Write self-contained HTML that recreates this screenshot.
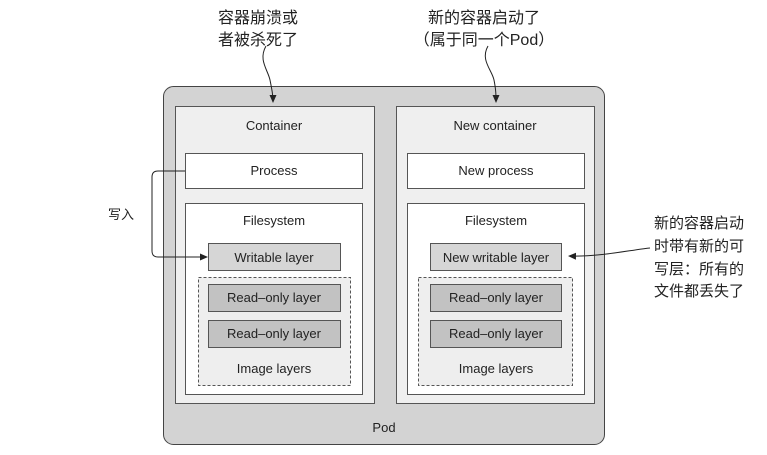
<!DOCTYPE html>
<html><head><meta charset="utf-8"><style>
html,body{margin:0;padding:0;background:#fff;width:767px;height:455px;overflow:hidden}
svg text{font-family:"Liberation Sans","Noto Sans CJK SC",sans-serif;fill:#222}
</style></head><body>
<svg width="767" height="455" viewBox="0 0 767 455" xmlns="http://www.w3.org/2000/svg">
<defs><marker id="a" markerWidth="8" markerHeight="8" refX="7" refY="4" orient="auto" markerUnits="userSpaceOnUse"><path d="M0,0.5 L8,4 L0,7.5z" fill="#222"/></marker></defs>
<rect x="163.5" y="86.5" width="441" height="358" rx="10" fill="#d3d3d3" stroke="#444"/>
<g stroke="#555" stroke-width="1">
<rect x="175.5" y="106.5" width="199" height="297" fill="#efefef"/>
<rect x="396.5" y="106.5" width="198" height="297" fill="#efefef"/>
<rect x="185.5" y="153.5" width="177" height="35" fill="#fff"/>
<rect x="407.5" y="153.5" width="177" height="35" fill="#fff"/>
<rect x="185.5" y="203.5" width="177" height="191" fill="#fff"/>
<rect x="407.5" y="203.5" width="177" height="191" fill="#fff"/>
<rect x="198.5" y="277.5" width="152" height="108" fill="#eee" stroke-dasharray="3,2"/>
<rect x="418.5" y="277.5" width="154" height="108" fill="#eee" stroke-dasharray="3,2"/>
<rect x="208.5" y="243.5" width="132" height="27" fill="#d6d6d6"/>
<rect x="430.5" y="243.5" width="131" height="27" fill="#d6d6d6"/>
<rect x="208.5" y="284.5" width="132" height="27" fill="#c2c2c2"/>
<rect x="208.5" y="320.5" width="132" height="27" fill="#c2c2c2"/>
<rect x="430.5" y="284.5" width="131" height="27" fill="#c2c2c2"/>
<rect x="430.5" y="320.5" width="131" height="27" fill="#c2c2c2"/>
</g>
<g font-size="13" text-anchor="middle">
<text x="274" y="130">Container</text><text x="495" y="130">New container</text>
<text x="274" y="175">Process</text><text x="496" y="175">New process</text>
<text x="274" y="225">Filesystem</text><text x="496" y="225">Filesystem</text>
<text x="274" y="262">Writable layer</text><text x="496" y="262">New writable layer</text>
<text x="274" y="302">Read–only layer</text><text x="496" y="302">Read–only layer</text>
<text x="274" y="338">Read–only layer</text><text x="496" y="338">Read–only layer</text>
<text x="274" y="373">Image layers</text><text x="496" y="373">Image layers</text>
<text x="384" y="432">Pod</text>
</g>
<g font-size="16" text-anchor="middle">
<text x="258" y="23">容器崩溃或</text><text x="258" y="45">者被杀死了</text>
<text x="484" y="23">新的容器启动了</text><text x="484" y="45">（属于同一个Pod）</text>
</g>
<g font-size="15">
<text x="654" y="228">新的容器启动</text><text x="654" y="251">时带有新的可</text>
<text x="654" y="274">写层：所有的</text><text x="654" y="296">文件都丢失了</text>
</g>
<text x="108" y="219" font-size="13">写入</text>
<g fill="none" stroke="#222" stroke-width="1">
<path d="M266,46 C258,60 268,70 270,80 C272,90 273,95 273,102" marker-end="url(#a)"/>
<path d="M488,46 C480,60 492,70 494,80 C496,90 496,95 496,102" marker-end="url(#a)"/>
<path d="M185,171 L158,171 Q152,171 152,177 L152,251 Q152,257 158,257 L207,257" marker-end="url(#a)"/>
<path d="M650,248 C630,250 600,257 569,256" marker-end="url(#a)"/>
</g>
</svg>
</body></html>
